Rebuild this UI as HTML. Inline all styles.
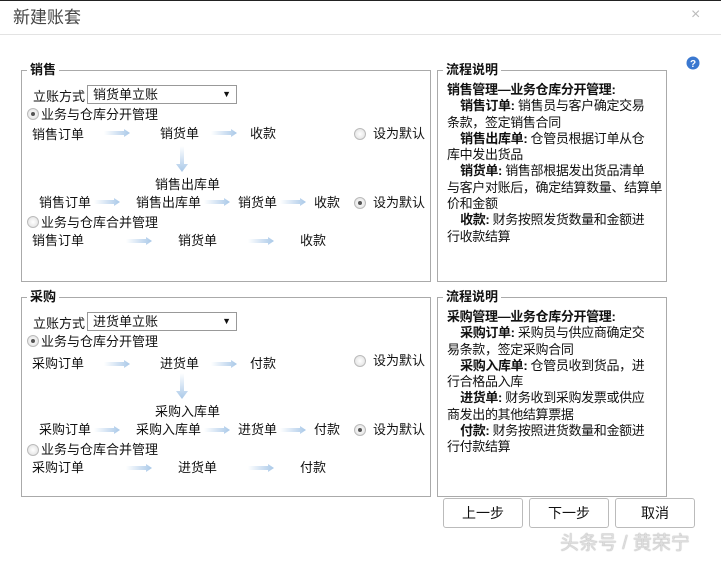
<!DOCTYPE html>
<html><head><meta charset="utf-8"><style>
*{margin:0;padding:0;box-sizing:border-box}
body{width:721px;height:562px;overflow:hidden;background:#fff;position:relative;font-family:"Liberation Sans","Noto Sans CJK SC","WenQuanYi Zen Hei",sans-serif;font-size:13px;color:#111}
.t{position:absolute;white-space:nowrap;line-height:16px}
.box{position:absolute;border:1px solid #aaa}
.lg{position:absolute;top:-9px;left:5px;background:#fff;padding:0 3px;font-weight:bold;font-size:13px;line-height:16px}
.ar{position:absolute;width:26px;height:8px}
.rd{position:absolute;width:12px;height:12px;border-radius:50%;border:1px solid #bbb;background:radial-gradient(circle,#fff,#ddd)}
.rd.on::after{content:"";position:absolute;left:3px;top:3px;width:4px;height:4px;border-radius:50%;background:#555}
.sel{position:absolute;width:150px;height:19px;border:1px solid #999;padding-left:5px;line-height:17px}
.sel::after{content:"▼";position:absolute;right:5px;top:0;font-size:9px}
.desc{position:absolute;left:447px;line-height:16.3px;font-size:13px;letter-spacing:-0.35px;white-space:nowrap}
.btn{position:absolute;top:498px;height:30px;width:80px;border:1px solid #bbb;border-radius:3px;text-align:center;line-height:28px;font-size:14px;background:#fff}
</style></head><body>
<svg width="0" height="0" style="position:absolute"><defs>
<linearGradient id="g" x1="0" x2="1"><stop offset="0" stop-color="#fff"/><stop offset="1" stop-color="#a9c8e8"/></linearGradient>
<linearGradient id="gv" x1="0" y1="0" x2="0" y2="1"><stop offset="0" stop-color="#fff"/><stop offset="1" stop-color="#a9c8e8"/></linearGradient>
</defs></svg>
<div style="position:absolute;left:0;top:0;width:721px;height:1px;background:#222"></div>
<div class="t" style="left:13px;top:8px;font-size:17px;line-height:20px;color:#444">新建账套</div>
<div class="t" style="left:691px;top:7px;font-size:16px;color:#bbb">×</div>
<div style="position:absolute;left:0;top:34px;width:721px;height:1px;background:#e3e3e3"></div>
<svg style="position:absolute;left:686px;top:56px" width="14" height="14"><circle cx="7" cy="7" r="6.5" fill="#3a78d0"/><text x="7" y="11" font-size="10" font-weight="bold" fill="#fff" text-anchor="middle" font-family="Liberation Sans">?</text></svg>

<div class="box" style="left:21px;top:70px;width:410px;height:212px"><div class="lg">销售</div></div>
<div class="box" style="left:437px;top:70px;width:230px;height:212px"><div class="lg">流程说明</div></div>
<div class="t" style="left:33px;top:89px">立账方式</div>
<div class="sel" style="left:87px;top:85px">销货单立账</div>
<div class="rd on" style="left:27px;top:108px"></div><div class="t" style="left:41px;top:107px">业务与仓库分开管理</div>
<div class="t" style="left:32px;top:127px">销售订单</div>
<svg class="ar" style="left:104px;top:129px"><path d="M0 2h20v-2l6 4-6 4v-2H0z" fill="url(#g)"/></svg>
<div class="t" style="left:160px;top:126px">销货单</div>
<svg class="ar" style="left:211px;top:129px"><path d="M0 2h20v-2l6 4-6 4v-2H0z" fill="url(#g)"/></svg>
<div class="t" style="left:250px;top:126px">收款</div>
<div class="rd" style="left:354px;top:128px"></div><div class="t" style="left:373px;top:126px">设为默认</div>
<svg style="position:absolute;left:176px;top:146px" width="12" height="26"><path d="M4 0h4v18h4l-6 8-6-8h4z" fill="url(#gv)"/></svg>
<div class="t" style="left:155px;top:177px">销售出库单</div>
<div class="t" style="left:39px;top:195px">销售订单</div>
<svg class="ar" style="left:94px;top:198px"><path d="M0 2h20v-2l6 4-6 4v-2H0z" fill="url(#g)"/></svg>
<div class="t" style="left:136px;top:195px">销售出库单</div>
<svg class="ar" style="left:204px;top:198px"><path d="M0 2h20v-2l6 4-6 4v-2H0z" fill="url(#g)"/></svg>
<div class="t" style="left:238px;top:195px">销货单</div>
<svg class="ar" style="left:280px;top:198px"><path d="M0 2h20v-2l6 4-6 4v-2H0z" fill="url(#g)"/></svg>
<div class="t" style="left:314px;top:195px">收款</div>
<div class="rd on" style="left:354px;top:197px"></div><div class="t" style="left:373px;top:195px">设为默认</div>
<div class="rd" style="left:27px;top:216px"></div><div class="t" style="left:41px;top:215px">业务与仓库合并管理</div>
<div class="t" style="left:32px;top:233px">销售订单</div>
<svg class="ar" style="left:126px;top:237px"><path d="M0 2h20v-2l6 4-6 4v-2H0z" fill="url(#g)"/></svg>
<div class="t" style="left:178px;top:233px">销货单</div>
<svg class="ar" style="left:248px;top:237px"><path d="M0 2h20v-2l6 4-6 4v-2H0z" fill="url(#g)"/></svg>
<div class="t" style="left:300px;top:233px">收款</div>
<div class="desc" style="top:82px"><b>销售管理—业务仓库分开管理:</b><br>&nbsp;&nbsp;&nbsp;&nbsp;<b>销售订单:</b> 销售员与客户确定交易<br>条款，签定销售合同<br>&nbsp;&nbsp;&nbsp;&nbsp;<b>销售出库单:</b> 仓管员根据订单从仓<br>库中发出货品<br>&nbsp;&nbsp;&nbsp;&nbsp;<b>销货单:</b> 销售部根据发出货品清单<br>与客户对账后，确定结算数量、结算单<br>价和金额<br>&nbsp;&nbsp;&nbsp;&nbsp;<b>收款:</b> 财务按照发货数量和金额进<br>行收款结算</div>

<div class="box" style="left:21px;top:297px;width:410px;height:200px"><div class="lg">采购</div></div>
<div class="box" style="left:437px;top:297px;width:230px;height:200px"><div class="lg">流程说明</div></div>
<div class="t" style="left:33px;top:316px">立账方式</div>
<div class="sel" style="left:87px;top:312px">进货单立账</div>
<div class="rd on" style="left:27px;top:335px"></div><div class="t" style="left:41px;top:334px">业务与仓库分开管理</div>
<div class="t" style="left:32px;top:356px">采购订单</div>
<svg class="ar" style="left:104px;top:360px"><path d="M0 2h20v-2l6 4-6 4v-2H0z" fill="url(#g)"/></svg>
<div class="t" style="left:160px;top:356px">进货单</div>
<svg class="ar" style="left:211px;top:360px"><path d="M0 2h20v-2l6 4-6 4v-2H0z" fill="url(#g)"/></svg>
<div class="t" style="left:250px;top:356px">付款</div>
<div class="rd" style="left:354px;top:355px"></div><div class="t" style="left:373px;top:353px">设为默认</div>
<svg style="position:absolute;left:176px;top:373px" width="12" height="26"><path d="M4 0h4v18h4l-6 8-6-8h4z" fill="url(#gv)"/></svg>
<div class="t" style="left:155px;top:404px">采购入库单</div>
<div class="t" style="left:39px;top:422px">采购订单</div>
<svg class="ar" style="left:94px;top:426px"><path d="M0 2h20v-2l6 4-6 4v-2H0z" fill="url(#g)"/></svg>
<div class="t" style="left:136px;top:422px">采购入库单</div>
<svg class="ar" style="left:204px;top:426px"><path d="M0 2h20v-2l6 4-6 4v-2H0z" fill="url(#g)"/></svg>
<div class="t" style="left:238px;top:422px">进货单</div>
<svg class="ar" style="left:280px;top:426px"><path d="M0 2h20v-2l6 4-6 4v-2H0z" fill="url(#g)"/></svg>
<div class="t" style="left:314px;top:422px">付款</div>
<div class="rd on" style="left:354px;top:424px"></div><div class="t" style="left:373px;top:422px">设为默认</div>
<div class="rd" style="left:27px;top:444px"></div><div class="t" style="left:41px;top:442px">业务与仓库合并管理</div>
<div class="t" style="left:32px;top:460px">采购订单</div>
<svg class="ar" style="left:126px;top:464px"><path d="M0 2h20v-2l6 4-6 4v-2H0z" fill="url(#g)"/></svg>
<div class="t" style="left:178px;top:460px">进货单</div>
<svg class="ar" style="left:248px;top:464px"><path d="M0 2h20v-2l6 4-6 4v-2H0z" fill="url(#g)"/></svg>
<div class="t" style="left:300px;top:460px">付款</div>
<div class="desc" style="top:309px"><b>采购管理—业务仓库分开管理:</b><br>&nbsp;&nbsp;&nbsp;&nbsp;<b>采购订单:</b> 采购员与供应商确定交<br>易条款，签定采购合同<br>&nbsp;&nbsp;&nbsp;&nbsp;<b>采购入库单:</b> 仓管员收到货品，进<br>行合格品入库<br>&nbsp;&nbsp;&nbsp;&nbsp;<b>进货单:</b> 财务收到采购发票或供应<br>商发出的其他结算票据<br>&nbsp;&nbsp;&nbsp;&nbsp;<b>付款:</b> 财务按照进货数量和金额进<br>行付款结算</div>

<div class="btn" style="left:443px">上一步</div>
<div class="btn" style="left:529px">下一步</div>
<div class="btn" style="left:615px">取消</div>
<div class="t" style="left:560px;top:533px;font-size:19px;line-height:22px;color:#ddd;text-shadow:0 0 1px #888">头条号 / 黄荣宁</div>
</body></html>
